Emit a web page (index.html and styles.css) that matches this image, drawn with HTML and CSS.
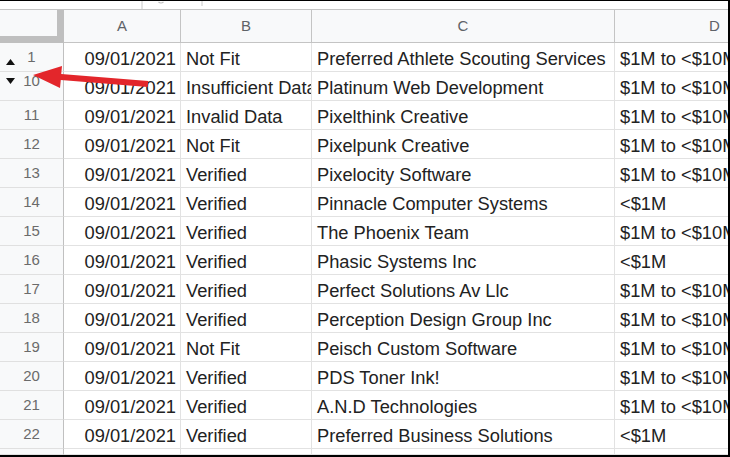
FILE: index.html
```html
<!DOCTYPE html>
<html>
<head>
<meta charset="utf-8">
<link rel="stylesheet" href="styles.css">
</head>
<body>
<div class="frame">
  <div class="strip">
    <svg width="730" height="8" viewBox="0 0 730 8">
      <line x1="142" y1="0" x2="142" y2="8" stroke="#c8c8c8" stroke-width="1"/>
      <path d="M158.5 1 Q161 3 163.5 1" stroke="#bdbdbd" stroke-width="1.2" fill="none"/>
      <line x1="202" y1="0" x2="202" y2="5" stroke="#c8c8c8" stroke-width="1"/>
    </svg>
  </div>
  <div class="sheet">
    <div class="row head">
      <div class="corner"></div>
      <div class="col">A</div>
      <div class="col">B</div>
      <div class="col">C</div>
      <div class="col">D</div>
    </div>
    <div class="row">
      <div class="num">1<svg class="tri tri-up" width="9" height="6" viewBox="0 0 9 6"><polygon points="4.5,0 9,6 0,6" fill="#111"/></svg></div>
      <div class="cell r">09/01/2021</div><div class="cell">Not Fit</div><div class="cell">Preferred Athlete Scouting Services</div><div class="cell">$1M to &lt;$10M</div>
    </div>
    <div class="row">
      <div class="num num-up">10<svg class="tri tri-down" width="9" height="6" viewBox="0 0 9 6"><polygon points="0,0 9,0 4.5,6" fill="#111"/></svg></div>
      <div class="cell r">09/01/2021</div><div class="cell">Insufficient Data</div><div class="cell">Platinum Web Development</div><div class="cell">$1M to &lt;$10M</div>
    </div>
    <div class="row">
      <div class="num">11</div>
      <div class="cell r">09/01/2021</div><div class="cell">Invalid Data</div><div class="cell">Pixelthink Creative</div><div class="cell">$1M to &lt;$10M</div>
    </div>
    <div class="row">
      <div class="num">12</div>
      <div class="cell r">09/01/2021</div><div class="cell">Not Fit</div><div class="cell">Pixelpunk Creative</div><div class="cell">$1M to &lt;$10M</div>
    </div>
    <div class="row">
      <div class="num">13</div>
      <div class="cell r">09/01/2021</div><div class="cell">Verified</div><div class="cell">Pixelocity Software</div><div class="cell">$1M to &lt;$10M</div>
    </div>
    <div class="row">
      <div class="num">14</div>
      <div class="cell r">09/01/2021</div><div class="cell">Verified</div><div class="cell">Pinnacle Computer Systems</div><div class="cell">&lt;$1M</div>
    </div>
    <div class="row">
      <div class="num">15</div>
      <div class="cell r">09/01/2021</div><div class="cell">Verified</div><div class="cell">The Phoenix Team</div><div class="cell">$1M to &lt;$10M</div>
    </div>
    <div class="row">
      <div class="num">16</div>
      <div class="cell r">09/01/2021</div><div class="cell">Verified</div><div class="cell">Phasic Systems Inc</div><div class="cell">&lt;$1M</div>
    </div>
    <div class="row">
      <div class="num">17</div>
      <div class="cell r">09/01/2021</div><div class="cell">Verified</div><div class="cell">Perfect Solutions Av Llc</div><div class="cell">$1M to &lt;$10M</div>
    </div>
    <div class="row">
      <div class="num">18</div>
      <div class="cell r">09/01/2021</div><div class="cell">Verified</div><div class="cell">Perception Design Group Inc</div><div class="cell">$1M to &lt;$10M</div>
    </div>
    <div class="row">
      <div class="num">19</div>
      <div class="cell r">09/01/2021</div><div class="cell">Not Fit</div><div class="cell">Peisch Custom Software</div><div class="cell">$1M to &lt;$10M</div>
    </div>
    <div class="row">
      <div class="num">20</div>
      <div class="cell r">09/01/2021</div><div class="cell">Verified</div><div class="cell">PDS Toner Ink!</div><div class="cell">$1M to &lt;$10M</div>
    </div>
    <div class="row">
      <div class="num">21</div>
      <div class="cell r">09/01/2021</div><div class="cell">Verified</div><div class="cell">A.N.D Technologies</div><div class="cell">$1M to &lt;$10M</div>
    </div>
    <div class="row">
      <div class="num">22</div>
      <div class="cell r">09/01/2021</div><div class="cell">Verified</div><div class="cell">Preferred Business Solutions</div><div class="cell">&lt;$1M</div>
    </div>
    <div class="row last">
      <div class="num"></div>
      <div class="cell"></div><div class="cell"></div><div class="cell"></div><div class="cell"></div>
    </div>
  </div>
  <svg class="arrow" width="160" height="100" viewBox="0 0 160 100">
    <polygon points="33,75 62,66 61.2,74 148.3,81 147.7,87 60.8,80 60,88" fill="#e3262b"/>
  </svg>
</div>
</body>
</html>
```

FILE: styles.css
```css
html, body {
  margin: 0;
  padding: 0;
  background: #fff;
}

.frame {
  position: relative;
  width: 730px;
  height: 457px;
  box-sizing: border-box;
  border-top: 1px solid #000;
  border-right: 2px solid #000;
  border-bottom: 2px solid #000;
  overflow: hidden;
  font-family: "Liberation Sans", Arial, sans-serif;
}

.strip {
  height: 8px;
  border-bottom: 1px solid #c4c4c4;
  background: #fff;
  overflow: hidden;
}

.strip svg {
  display: block;
}

.sheet {
  width: 815px;
}

.row {
  display: grid;
  grid-template-columns: 64px 117px 131px 303px 200px;
  height: 29px;
}

.row.head {
  height: 33px;
}

.row.last {
  height: 6px;
}

.row > div {
  box-sizing: border-box;
  border-right: 1px solid #e2e2e2;
  border-bottom: 1px solid #e2e2e2;
  overflow: hidden;
  white-space: nowrap;
}

.corner {
  background: #f8f9fa;
  border-right: 7px solid #bfbfbf !important;
  border-bottom: 7px solid #bfbfbf !important;
}

.head .col {
  background: #f8f9fa;
  border-right-color: #c4c4c4;
  border-bottom-color: #c4c4c4;
  color: #5f6368;
  font-size: 15px;
  line-height: 32px;
  text-align: center;
}

.num {
  position: relative;
  background: #f8f9fa;
  border-right-color: #c0c0c0 !important;
  border-bottom-color: #e0e0e0 !important;
  color: #6b6b6b;
  font-size: 15px;
  line-height: 28px;
  padding-top: 0;
  text-align: center;
}

.num-up {
  line-height: 18px;
}

.tri {
  position: absolute;
  left: 6px;
}

.tri-up {
  top: 16px;
}

.tri-down {
  top: 6px;
}

.cell {
  color: #222;
  font-size: 18.3px;
  line-height: 24px;
  padding: 4px 5px 0 5px;
}

.cell.r {
  text-align: right;
  padding-right: 4px;
}

.arrow {
  position: absolute;
  left: 0;
  top: -1px;
}
```
